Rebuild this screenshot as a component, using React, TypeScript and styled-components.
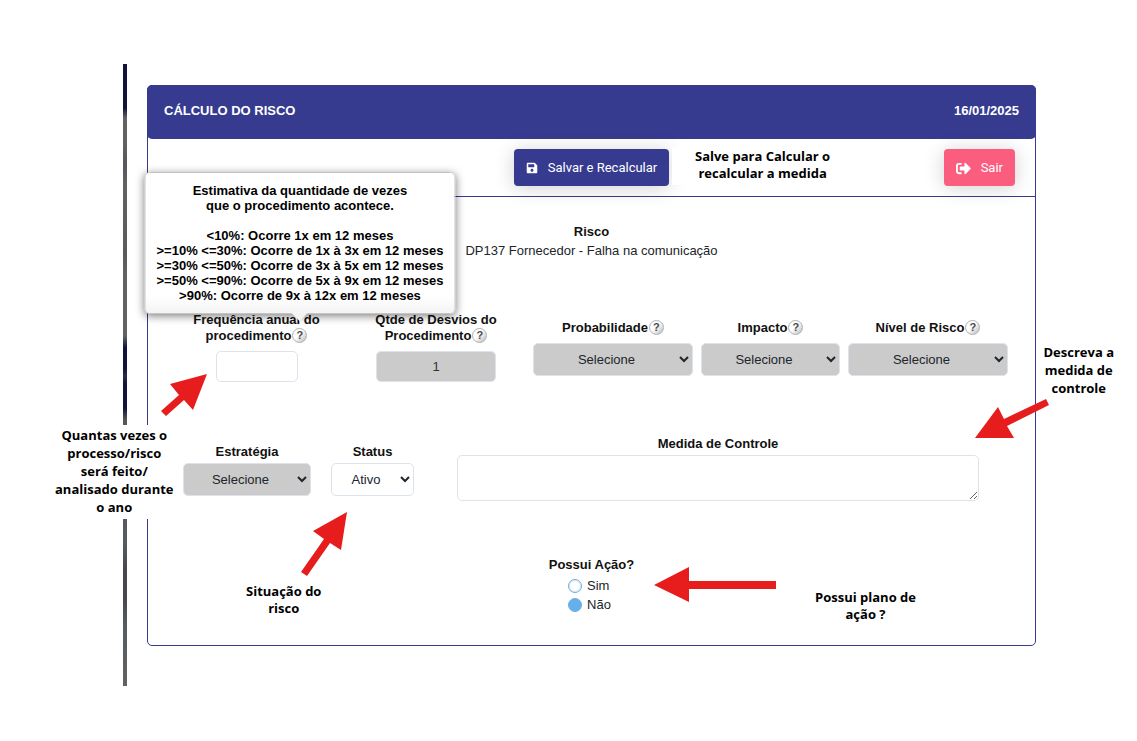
import React from "react";
import styled, { createGlobalStyle, css } from "styled-components";
import { FaSave, FaSignOutAlt } from "react-icons/fa";

const Global = createGlobalStyle`
  *, *::before, *::after { box-sizing: border-box; }
  body {
    margin: 0;
    background: #fff;
    color: #212529;
    font-family: "Liberation Sans", Arial, sans-serif;
    font-size: 13px;
    line-height: 16px;
  }
  button, input, select, textarea { font: inherit; color: inherit; }
`;

const Page = styled.main`
  display: flex;
  gap: 20px;
  padding: 64px 101px 55px 123px;
`;

const Rail = styled.div`
  flex: none;
  width: 4px;
  background: linear-gradient(
    #12123a 0, #12123a 44px, #626262 54px, #626262 80px, #56565c 100px,
    #626262 120px, #5a5a5e 190px, #626262 210px, #626262 272px,
    #12123a 284px, #12123a 304px, #2c2c46 312px, #12123a 320px,
    #12123a 344px, #555759 356px, #555b5f 480px, #48484c 505px,
    #48484c 535px, #555b5f 560px, #626262 100%
  );
`;

const Card = styled.section`
  position: relative;
  flex: 1;
  min-width: 0;
  margin: 21px 0 40px;
  border: 1px solid #363b8f;
  border-radius: 5px;
`;

const CardHeader = styled.header`
  display: flex;
  justify-content: space-between;
  margin: -1px -1px 0;
  padding: 18px 17px 20px;
  border-radius: 5px;
  background: #363b8f;
  color: #fff;
  font-weight: 700;
`;

const Title = styled.h1`
  margin: 0;
  font-size: 13px;
  font-weight: 700;
`;

const Toolbar = styled.div`
  display: grid;
  grid-template-columns: 1fr auto 1fr;
  padding: 10px 20px;
  border-bottom: 1px solid #363b8f;
`;

const ActionButton = styled.button<{ $tone: "primary" | "danger" }>`
  display: flex;
  align-items: center;
  gap: 10px;
  height: 37px;
  padding: 1px 12px 0;
  border: 0;
  border-radius: 4px;
  background: ${(p) => (p.$tone === "primary" ? "#363b8f" : "#fb5d7f")};
  color: #fff;
  font-family: Roboto, sans-serif;
  box-shadow: 0 2px 20px rgba(0, 0, 0, 0.18);
  ${(p) => p.$tone === "danger" && css`grid-column: 3; justify-self: end;`}
  ${(p) => p.$tone === "primary" && css`grid-column: 2;`}
`;

const Risk = styled.div`
  padding-top: 25px;
  text-align: center;
  line-height: 19px;
`;

const Strong = styled.strong`
  display: block;
  color: #111;
`;

const MetricsRow = styled.div`
  display: grid;
  grid-template-columns: 179fr 180fr 171fr 147fr 168fr;
  padding: 52px 23px 0 19px;
`;

const StrategyRow = styled.div`
  display: grid;
  grid-template-columns: 128fr 83fr 545fr;
  gap: 20px;
  padding: 54px 56px 0 35px;
`;

const Field = styled.div<{
  $lead?: number;
  $inset?: number;
  $side?: number;
  $space?: number;
}>`
  display: flex;
  flex-direction: column;
  align-items: center;
  gap: ${(p) => p.$space ?? 7}px;
  padding: ${(p) => p.$lead ?? 0}px ${(p) => p.$inset ?? 0}px 0
    ${(p) => p.$side ?? p.$inset ?? 0}px;
`;

const LabelLine = styled.div`
  color: #111;
  font-weight: 700;
  text-align: center;
`;

const Control = css`
  border: 1px solid #dde3ec;
  border-radius: 5px;
  background: #fff;
`;

const NumberBox = styled.input<{ $width: number }>`
  ${Control}
  width: ${(p) => p.$width}px;
  height: 31px;
  padding: 0;
  text-align: center;
  &:disabled { background: #cbcbcb; color: #333; opacity: 1; }
`;

const SelectBox = styled.select<{ $muted?: boolean }>`
  ${Control}
  width: 100%;
  height: 33px;
  padding: 0 1px 0 0;
  text-align: center;
  text-align-last: center;
  ${(p) => p.$muted && css`background: #cbcbcb;`}
`;

const TextArea = styled.textarea`
  ${Control}
  display: block;
  width: 100%;
  height: 46px;
  resize: both;
`;

const HelpAnchor = styled.span`
  position: relative;
  display: inline-block;
  vertical-align: top;
  margin-left: 1px;
`;

const HelpButton = styled.button`
  display: block;
  width: 15px;
  height: 15px;
  padding: 0;
  border: 1px solid #b0b0b0;
  border-radius: 50%;
  background: linear-gradient(135deg, #fff 45%, #b8b8b8);
  color: #4a4a4a;
  font-size: 11px;
  font-weight: 700;
  line-height: 13px;
  text-align: center;
`;

const Tooltip = styled.div`
  position: absolute;
  bottom: calc(100% + 14px);
  left: 50%;
  z-index: 2;
  width: 311px;
  padding: 10px 0;
  border: 1px solid #c4c4c4;
  border-radius: 5px;
  background: linear-gradient(#fff 88%, #f4f4f4);
  box-shadow: 0 2px 9px rgba(0, 0, 0, 0.5);
  color: #000;
  line-height: 15px;
  text-align: center;
  white-space: pre-line;
  transform: translateX(-50%);

  &::after {
    content: "";
    position: absolute;
    top: 100%;
    left: 50%;
    margin-left: -8px;
    border: 8px solid transparent;
    border-top-color: #f4f4f4;
    border-bottom: 0;
  }
`;

const ActionGroup = styled.fieldset`
  display: flex;
  flex-direction: column;
  align-items: center;
  margin: 0;
  padding: 56px 0 31px;
  border: 0;
`;

const Legend = styled.legend`
  display: contents;
`;

const Options = styled.div`
  display: flex;
  flex-direction: column;
  padding: 3px 4px 0 0;
`;

const Option = styled.label`
  display: flex;
  align-items: center;
  gap: 5px;
  height: 19px;
`;

const Radio = styled.input`
  appearance: none;
  width: 14px;
  height: 14px;
  margin: 0;
  border: 1px solid #67afe9;
  border-radius: 50%;
  box-shadow: inset 0 0 2px rgba(0, 0, 0, 0.25);
  &:checked { background: #67afe9; box-shadow: none; }
`;

type Place = { $top: number; $left?: number; $right?: number };
const placed = css<Place>`
  position: absolute;
  z-index: 1;
  top: ${(p) => p.$top}px;
  ${(p) => p.$left !== undefined && `left: ${p.$left}px;`}
  ${(p) => p.$right !== undefined && `right: ${p.$right}px;`}
`;

const Note = styled.p<Place & { $tight?: boolean; $margin?: number }>`
  ${placed}
  margin: 0;
  padding: 1px ${(p) => p.$margin ?? 5}px 3px;
  background: #fff;
  color: #000;
  font-family: "Open Sans", "Noto Sans", sans-serif;
  font-size: 13px;
  font-weight: 700;
  line-height: ${(p) => (p.$tight ? 17 : 18)}px;
  text-align: center;
  white-space: pre;
`;

const Arrow = styled.svg<Place>`
  ${placed}
  fill: #e71d1d;
  pointer-events: none;
`;

const TIP = `Estimativa da quantidade de vezes
que o procedimento acontece.

<10%: Ocorre 1x em 12 meses
>=10% <=30%: Ocorre de 1x à 3x em 12 meses
>=30% <=50%: Ocorre de 3x à 5x em 12 meses
>=50% <=90%: Ocorre de 5x à 9x em 12 meses
>90%: Ocorre de 9x à 12x em 12 meses`;

function Help({ about, tip }: { about: string; tip?: string }) {
  return (
    <HelpAnchor>
      <HelpButton type="button" aria-label={`Ajuda: ${about}`}>?</HelpButton>
      {tip && <Tooltip role="tooltip">{tip}</Tooltip>}
    </HelpAnchor>
  );
}

type SelectFieldProps = {
  id: string;
  label: string;
  help?: boolean;
  value?: string;
  muted?: boolean;
  inset?: number;
  side?: number;
  space?: number;
};

function SelectField({
  id, label, help, value = "Selecione", muted = true, inset, side, space,
}: SelectFieldProps) {
  return (
    <Field $lead={8} $inset={inset} $side={side} $space={space}>
      <LabelLine>
        <label htmlFor={id}>{label}</label>
        {help && <Help about={label} />}
      </LabelLine>
      <SelectBox id={id} $muted={muted} defaultValue={value}>
        <option>{value}</option>
      </SelectBox>
    </Field>
  );
}

export default function App() {
  return (
    <>
      <Global />
      <Page>
        <Rail />
        <Card>
          <CardHeader>
            <Title>CÁLCULO DO RISCO</Title>
            <time dateTime="2025-01-16">16/01/2025</time>
          </CardHeader>
          <Toolbar>
            <ActionButton type="button" $tone="primary"><FaSave size={12} />Salvar e Recalcular</ActionButton>
            <ActionButton type="button" $tone="danger"><FaSignOutAlt size={15} />Sair</ActionButton>
          </Toolbar>
          <Risk>
            <Strong>Risco</Strong>
            DP137 Fornecedor - Falha na comunicação
          </Risk>
          <MetricsRow>
            <Field>
              <LabelLine>
                <label htmlFor="freq">Frequência anual do<br />procedimento</label>
                <Help about="Frequência anual do procedimento" tip={TIP} />
              </LabelLine>
              <NumberBox id="freq" $width={82} />
            </Field>
            <Field>
              <LabelLine>
                <label htmlFor="qtde">Qtde de Desvios do<br />Procedimento</label>
                <Help about="Qtde de Desvios do Procedimento" />
              </LabelLine>
              <NumberBox id="qtde" $width={120} defaultValue="1" disabled />
            </Field>
            <SelectField id="prob" label="Probabilidade" help inset={4} side={7} />
            <SelectField id="imp" label="Impacto" help inset={4} />
            <SelectField id="nivel" label="Nível de Risco" help inset={4} />
          </MetricsRow>
          <StrategyRow>
            <SelectField id="estrategia" label="Estratégia" space={3} />
            <SelectField id="status" label="Status" value="Ativo" muted={false} space={3} />
            <Field $side={23} $space={3}>
              <LabelLine as="label" htmlFor="medida">Medida de Controle</LabelLine>
              <TextArea id="medida" />
            </Field>
          </StrategyRow>
          <ActionGroup>
            <Legend><Strong>Possui Ação?</Strong></Legend>
            <Options>
              <Option><Radio type="radio" name="acao" />Sim</Option>
              <Option><Radio type="radio" name="acao" defaultChecked />Não</Option>
            </Options>
          </ActionGroup>

          <Note $top={61} $left={524} $margin={23} $tight>{"Salve para Calcular o\nrecalcular a medida"}</Note>
          <Note $top={256} $right={-84}>{"Descreva a\nmedida de\ncontrole"}</Note>
          <Note $top={339} $left={-98}>{"Quantas vezes o\nprocesso/risco\nserá feito/\nanalisado durante\no ano"}</Note>
          <Note $top={496} $left={93} $tight>{"Situação do\nrisco"}</Note>
          <Note $top={502} $right={114} $tight>{"Possui plano de\nação ?"}</Note>

          <Arrow $top={288} $left={13} width={46} height={43} viewBox="161 374 46 43" aria-hidden="true">
            <path d="M207 374 170 384 179 395 161 411 166 416 184 400 193 410Z" />
          </Arrow>
          <Arrow $top={426} $left={153} width={47} height={65} viewBox="301 512 47 65" aria-hidden="true">
            <path d="M347 512 313 531 324 539 301 572 307 576 330 543 341 550Z" />
          </Arrow>
          <Arrow $top={481} $left={506} width={122} height={36} viewBox="654 567 122 36" aria-hidden="true">
            <path d="M654 585 689 567V581H776V589H689V602Z" />
          </Arrow>
          <Arrow $top={312} $right={-14} width={74} height={41} viewBox="975 398 74 41" aria-hidden="true">
            <path d="M975 438 998 407 1004 419 1046 399 1049 405 1007 426 1014 438Z" />
          </Arrow>
        </Card>
      </Page>
    </>
  );
}
